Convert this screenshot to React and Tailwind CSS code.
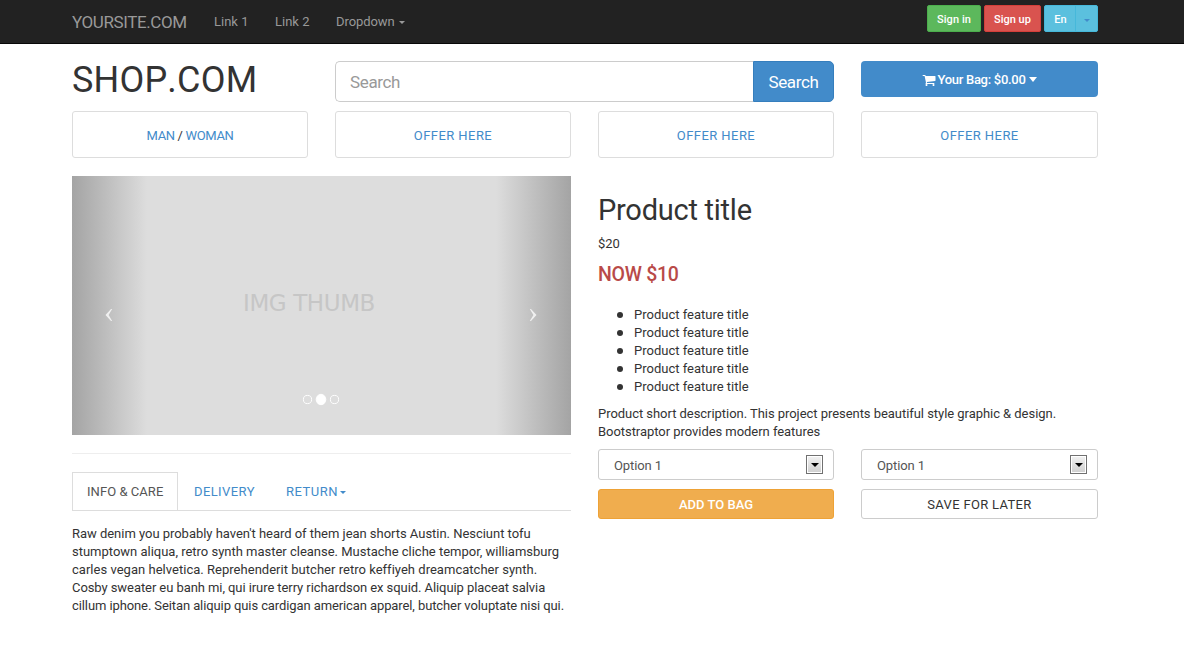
const Caret = ({ className = "" }) => (
  <span
    className={`inline-block h-0 w-0 border-x-[3px] border-t-[3px] border-x-transparent border-t-current align-middle ${className}`}
  />
);

const CartIcon = () => (
  <svg width="14" height="14" viewBox="0 0 1792 1792" fill="currentColor">
    <path d="M704 1536q0 52-38 90t-90 38-90-38-38-90 38-90 90-38 90 38 38 90zm896 0q0 52-38 90t-90 38-90-38-38-90 38-90 90-38 90 38 38 90zm128-1088v512q0 24-16.5 42.500t-40.500 21.500l-1044 122q13 60 13 70 0 16-24 64h920q26 0 45 19t19 45-19 45-45 19h-1024q-26 0-45-19t-19-45q0-11 8-31.500t16-36 21.500-40 15.500-29.500l-177-823h-204q-26 0-45-19t-19-45 19-45 45-19h256q16 0 28.500 6.500t19.500 15.500 13 24.500 8 26 5.500 29.500 4.500 26h1201q26 0 45 19t19 45z" />
  </svg>
);

function Navbar() {
  return (
    <header className="h-[44px] border-b border-[#080808] bg-[#222222] px-[72px] text-[#999999]">
      <div className="flex h-[43px] w-[1026px] items-center">
        <a className="w-[142px] text-[17px] leading-[18px] tracking-[-0.4px]">YOURSITE.COM</a>
        <a className="w-[61px]">Link 1</a>
        <a className="w-[61px]">Link 2</a>
        <a className="flex items-center tracking-[-0.08px]">
          Dropdown <Caret className="ml-[4px] mt-[2px]" />
        </a>
        <div className="mb-[6px] ml-auto flex gap-[3px] text-[11px] font-medium text-white">
          <button className="h-[27px] w-[54px] rounded-[2px] border border-[#4cae4c] bg-[#5cb85c] pt-[2px] tracking-[0.1px]">Sign in</button>
          <button className="h-[27px] w-[57px] rounded-[2px] border border-[#d43f3a] bg-[#d9534f] pt-[2px]">Sign up</button>
          <div className="flex h-[27px] w-[54px] rounded-[2px] border border-[#46b8da] bg-[#5bc0de]">
            <button className="w-[31px] border-r border-[#46b8da] pl-px pt-[2px]">En</button>
            <button className="flex flex-1 items-center justify-center text-[#428bca]">
              <Caret className="mt-[4px]" />
            </button>
          </div>
        </div>
      </div>
    </header>
  );
}

const Offer = ({ className = "tracking-[0.43px]", children }) => (
  <div className="flex h-[47px] items-center justify-center rounded-[3px] border border-[#dddddd] pt-[2px] text-[#428bca]">
    <span className={className}>{children}</span>
  </div>
);

function Carousel() {
  return (
    <div className="relative h-[259px] bg-[#dddddd]">
      <div className="absolute inset-y-0 left-0 w-[75px] bg-linear-to-r from-[#a4a4a4] to-[#dddddd]" />
      <div className="absolute inset-y-0 right-0 w-[75px] bg-linear-to-l from-[#a4a4a4] to-[#dddddd]" />
      <span className="absolute left-[171px] top-[113px] whitespace-nowrap font-['DejaVu_Sans'] text-[23px] leading-[28px] tracking-[-0.4px] text-[#c6c6c6]">
        IMG THUMB
      </span>
      <svg className="absolute left-[33px] top-[132px]" width="8" height="14" fill="#f0f0f0">
        <path d="M6 1h1.2L3.600 7l3.600 6H6L.5 7z" />
      </svg>
      <svg className="absolute right-[34px] top-[132px]" width="8" height="14" fill="#f0f0f0">
        <path d="M2 1H.8l3.600 6L.8 13H2l5.500-6z" />
      </svg>
      <svg className="absolute left-[230px] top-[217px]" width="39" height="13" fill="none" stroke="white">
        <circle cx="5.5" cy="6.5" r="4.1" />
        <ellipse cx="19" cy="6.5" rx="4.8" ry="5.2" fill="white" />
        <circle cx="32.5" cy="6.5" r="4.1" />
      </svg>
    </div>
  );
}

const Select = () => (
  <div className="flex h-[31px] items-center justify-between rounded-[3px] border border-[#cccccc] pl-[15px] pr-[10px] text-[#555555]">
    <span className="pt-[2px] tracking-[-0.1px]">Option 1</span>
    <span className="flex h-[19px] w-[17px] items-center justify-center border border-[#707070] bg-linear-to-b from-[#f2f2f2] to-[#cfcfcf] text-black shadow-[inset_0_0_0_1px_white]">
      <span className="h-0 w-0 border-x-4 border-t-4 border-x-transparent border-t-black" />
    </span>
  </div>
);

const features = [1, 2, 3, 4, 5];

export default function App() {
  return (
    <div className="h-[660px] w-[1184px] overflow-hidden bg-white font-[Roboto,sans-serif] text-[13px] leading-[18px] text-[#333333]">
      <Navbar />
      <main className="ml-[72px] w-[1026px]">
        <section className="grid h-[67px] grid-cols-[236px_236px_236px_237px] gap-x-[27px] pt-[17px]">
          <h1 className="whitespace-nowrap pt-px text-[36px] font-normal leading-[36px] tracking-[0.2px] [font-kerning:none]">SHOP.COM</h1>
          <div className="col-span-2 flex h-[41px] text-[17px] tracking-[-0.35px]">
            <input
              placeholder="Search"
              className="min-w-0 flex-1 rounded-l-[5px] border border-r-0 border-[#cccccc] px-[14px] pt-px placeholder:text-[#999999]"
            />
            <button className="w-[81px] rounded-r-[5px] border border-[#357ebd] bg-[#428bca] pt-px text-white">Search</button>
          </div>
          <button className="flex h-[36px] items-center justify-center rounded-[4px] bg-[#428bca] pt-px font-medium text-white">
            <CartIcon />
            <span className="ml-px tracking-[-0.28px]">Your Bag: $0.00</span>
            <span className="mb-px ml-[3px] h-0 w-0 border-x-[4px] border-t-[5px] border-x-transparent border-t-white" />
          </button>
        </section>
        <section className="grid grid-cols-[236px_236px_236px_237px] gap-x-[27px]">
          <Offer className="tracking-[-0.35px]">
            MAN <span className="text-[#333333]">/</span> WOMAN
          </Offer>
          <Offer>OFFER HERE</Offer>
          <Offer>OFFER HERE</Offer>
          <Offer>OFFER HERE</Offer>
        </section>
        <section className="mt-[18px] grid grid-cols-[499px_500px] gap-x-[27px]">
          <div className="min-w-0">
            <Carousel />
            <div className="mt-[18px] border-t border-[#eeeeee]" />
            <div className="mt-[18px] flex h-[39px] border-b border-[#dddddd] text-[#428bca]">
              <a className="-mb-px h-[38px] w-[106px] border border-b-0 border-[#dddddd] bg-white pl-[14px] pt-[10px] tracking-[0.05px] text-[#555555]">
                INFO &amp; CARE
              </a>
              <a className="w-[92px] pl-[16px] pt-[11px] tracking-[0.4px]">DELIVERY</a>
              <a className="flex items-center pl-[16px] pt-[1px] tracking-[0.5px]">
                RETURN <Caret className="ml-[2px] mt-[2px]" />
              </a>
            </div>
            <p className="mt-[14px] whitespace-nowrap">
              <span className="block tracking-[-0.03px]">Raw denim you probably haven't heard of them jean shorts Austin. Nesciunt tofu</span>
              <span className="block tracking-[-0.01px]">stumptown aliqua, retro synth master cleanse. Mustache cliche tempor, williamsburg</span>
              <span className="block tracking-[0.025px]">carles vegan helvetica. Reprehenderit butcher retro keffiyeh dreamcatcher synth.</span>
              <span className="block tracking-[-0.075px]">Cosby sweater eu banh mi, qui irure terry richardson ex squid. Aliquip placeat salvia</span>
              <span className="block tracking-[-0.1px]">cillum iphone. Seitan aliquip quis cardigan american apparel, butcher voluptate nisi qui.</span>
            </p>
          </div>
          <div className="min-w-0 pt-[18px]">
            <h2 className="text-[29px] font-normal leading-[32px] tracking-[-0.25px]">Product title</h2>
            <p className="mt-[9px] tracking-[-0.1px]">$20</p>
            <h3 className="mt-[11px] text-[19.5px] font-medium leading-[22px] tracking-[-0.27px] text-[#b94a48]">NOW $10</h3>
            <ul className="mt-[20px] pl-[19px]">
              {features.map((n) => (
                <li key={n} className="flex items-center">
                  <span className="mb-px mr-[11px] h-[6px] w-[6px] rounded-full bg-[#333333]" />
                  Product feature title
                </li>
              ))}
            </ul>
            <p className="mt-[9px] whitespace-nowrap tracking-[-0.045px]">
              Product short description. This project presents beautiful style graphic &amp; design.
              <br />
              Bootstraptor provides modern features
            </p>
            <div className="mt-[8px] grid grid-cols-[236px_237px] gap-x-[27px] gap-y-[9px]">
              <Select />
              <Select />
              <button className="h-[30px] rounded-[3px] border border-[#eea236] bg-[#f0ad4e] pt-px font-medium text-white">
                ADD TO BAG
              </button>
              <button className="h-[30px] rounded-[3px] border border-[#cccccc] pt-px tracking-[0.32px]">SAVE FOR LATER</button>
            </div>
          </div>
        </section>
      </main>
    </div>
  );
}
